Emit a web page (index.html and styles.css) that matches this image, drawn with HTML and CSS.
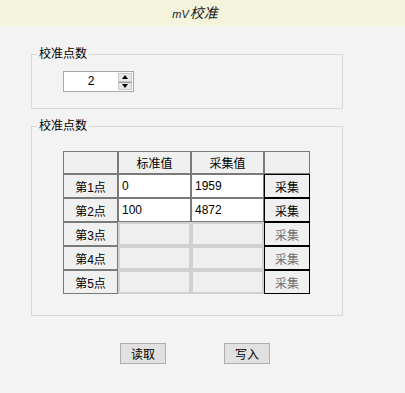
FILE: index.html
```html
<!DOCTYPE html>
<html lang="zh-CN">
<head>
    <meta charset="UTF-8">
    <title>mV校准</title>
    <link rel="stylesheet" href="styles.css">
</head>
<body>
    <div class="titlebar">
        <span class="title"><span class="unit">mV</span>校准</span>
    </div>
    <div class="content">
        <fieldset class="group group-count">
            <legend>校准点数</legend>
            <div class="spin">
                <span class="spin-value">2</span>
                <span class="spin-btns">
                    <span class="spin-btn"><span class="arrow-up"></span></span>
                    <span class="spin-btn"><span class="arrow-down"></span></span>
                </span>
            </div>
        </fieldset>
        <fieldset class="group group-table">
            <legend>校准点数</legend>
            <table class="calib">
                <thead>
                    <tr>
                        <th class="col-name"></th>
                        <th class="col-val">标准值</th>
                        <th class="col-val">采集值</th>
                        <th class="col-btn"></th>
                    </tr>
                </thead>
                <tbody>
                    <tr>
                        <th>第1点</th>
                        <td class="val">0</td>
                        <td class="val">1959</td>
                        <td class="btn">采集</td>
                    </tr>
                    <tr>
                        <th>第2点</th>
                        <td class="val">100</td>
                        <td class="val">4872</td>
                        <td class="btn">采集</td>
                    </tr>
                    <tr class="disabled">
                        <th>第3点</th>
                        <td class="val"></td>
                        <td class="val"></td>
                        <td class="btn">采集</td>
                    </tr>
                    <tr class="disabled">
                        <th>第4点</th>
                        <td class="val"></td>
                        <td class="val"></td>
                        <td class="btn">采集</td>
                    </tr>
                    <tr class="disabled">
                        <th>第5点</th>
                        <td class="val"></td>
                        <td class="val"></td>
                        <td class="btn">采集</td>
                    </tr>
                </tbody>
            </table>
        </fieldset>
        <div class="actions">
            <button>读取</button>
            <button>写入</button>
        </div>
    </div>
</body>
</html>
```

FILE: styles.css
```css
body {
    margin: 0;
    background-color: #f3f3f3;
    font-family: "Liberation Sans", "Noto Sans CJK SC", sans-serif;
    font-size: 12px;
    color: #000;
}
.titlebar {
    height: 26px;
    background-color: #f4f4dc;
    display: flex;
    justify-content: center;
    align-items: center;
    padding-right: 15px;
}
.title {
    font-style: italic;
    font-size: 14px;
    line-height: 16px;
    color: #222;
}
.title .unit {
    font-size: 11px;
    margin-right: 1px;
}
.content {
    padding: 21px 0 0 31px;
}
.group {
    box-sizing: border-box;
    width: 312px;
    margin: 0;
    padding: 0;
    border: 1px solid #d8d8d8;
    min-width: 0;
}
.group legend {
    margin-left: 5px;
    padding: 0 2px;
    font-size: 12px;
    line-height: 14px;
}
.group-count {
    padding: 10px 0 16px 0;
}
.group-table {
    margin-top: 10px;
    padding: 18px 0 21px 0;
}
.spin {
    display: flex;
    width: 69px;
    height: 19px;
    margin-left: 31px;
    border: 1px solid #a8a8a8;
    background-color: #fff;
}
.spin-value {
    flex: 1;
    text-align: center;
    line-height: 19px;
    font-size: 12px;
}
.spin-btns {
    width: 14px;
    display: flex;
    flex-direction: column;
    padding: 1px 1px 1px 0;
}
.spin-btn {
    flex: 1;
    background-color: #e8e8e8;
    border: 1px solid #c8c8c8;
    display: flex;
    justify-content: center;
    align-items: center;
}
.spin-btn + .spin-btn {
    border-top: 1px solid #9a9a9a;
}
.arrow-up {
    border-left: 3px solid transparent;
    border-right: 3px solid transparent;
    border-bottom: 4px solid #000;
}
.arrow-down {
    border-left: 3px solid transparent;
    border-right: 3px solid transparent;
    border-top: 4px solid #000;
}
.calib {
    border-collapse: separate;
    border-spacing: 0;
    table-layout: fixed;
    width: 247px;
    margin-left: 31px;
}
.calib th, .calib td {
    padding: 0;
    font-weight: normal;
    font-size: 12px;
    box-sizing: border-box;
}
.calib thead th {
    height: 23px;
    background-color: #f0f0f0;
    border: 1px solid #7a7a7a;
    text-align: center;
}
.calib tbody th {
    height: 24px;
    background-color: #f0f0f0;
    border: 1px solid #7a7a7a;
    text-align: center;
}
.col-name {
    width: 55px;
}
.col-val {
    width: 73px;
}
.col-btn {
    width: 46px;
}
.calib td.val {
    height: 24px;
    background-color: #fff;
    border: 1px solid #7a7a7a;
    padding-left: 3px;
    text-align: left;
}
.calib td.btn {
    height: 24px;
    background-color: #f0f0f0;
    border: 1px solid #000;
    text-align: center;
}
.calib tr.disabled td.val {
    background-color: #efefef;
    border: 2px solid #d0d0d0;
}
.calib tr.disabled td.btn {
    color: #6d6d6d;
}
.actions {
    display: flex;
    gap: 58px;
    padding: 27px 0 0 89px;
}
.actions button {
    width: 46px;
    height: 21px;
    padding: 0;
    background-color: #e1e1e1;
    border: 1px solid #adadad;
    font-family: "Liberation Sans", "Noto Sans CJK SC", sans-serif;
    font-size: 12px;
    color: #000;
}
```
